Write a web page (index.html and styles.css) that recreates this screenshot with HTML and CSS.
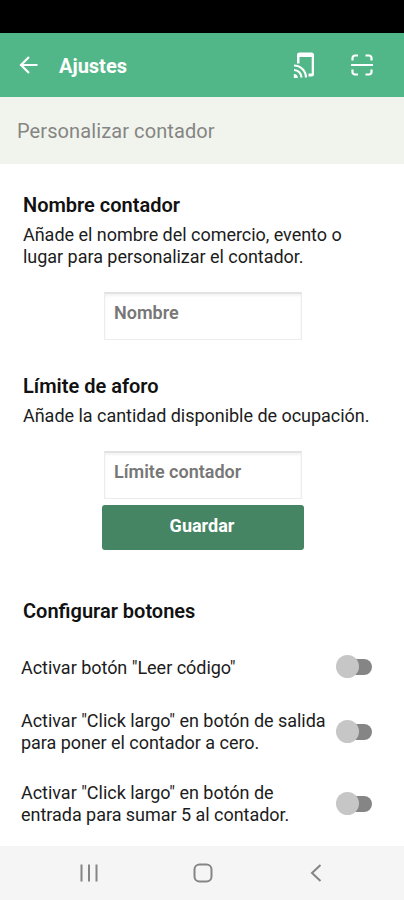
FILE: index.html
```html
<!DOCTYPE html>
<html lang="es">
<head>
    <meta charset="UTF-8">
    <meta name="viewport" content="width=device-width, initial-scale=1.0">
    <title>Ajustes</title>
    <link rel="stylesheet" href="styles.css">
</head>
<body>

    <div class="status-bar"></div>

    <!-- Header -->
    <header class="header">
        <svg class="icon-back" width="20" height="20" viewBox="0 0 20 20">
            <path d="M18.500 10H2.500M10 2L2 10L10 18" />
        </svg>
        <h1>Ajustes</h1>
        <svg class="icon-tap" width="24" height="28" viewBox="0 0 24 28">
            <path class="fill" d="M6.500 1.500h12a2.500 2.500 0 0 1 2.500 2.500v19a2.500 2.500 0 0 1-2.500 2.500h-3v-3h3.200V6H6.500v6.500H4V4A2.500 2.500 0 0 1 6.500 1.500z" />
            <path d="M1 14.500A12 12 0 0 1 13 26.500M1 19A7.500 7.500 0 0 1 8.500 26.500" />
            <path class="fill" d="M.8 23a4 4 0 0 1 4 4h-4z" />
        </svg>
        <svg class="icon-scan" width="24" height="24" viewBox="0 0 24 24">
            <path d="M2.500 7.500V5a2.500 2.500 0 0 1 2.500-2.500h3M15.500 2.500h3.500a2.500 2.500 0 0 1 2.500 2.500v2.500M2.500 16.500V19a2.500 2.500 0 0 0 2.500 2.500h3M15.500 21.500h3.500a2.500 2.500 0 0 0 2.500-2.500v-2.500M1 12h22" />
        </svg>
    </header>

    <div class="subtitle">Personalizar contador</div>

    <!-- Settings -->
    <main class="content">
        <section class="name-section">
            <h2>Nombre contador</h2>
            <p>Añade el nombre del comercio, evento o<br>lugar para personalizar el contador.</p>
            <input type="text" id="name" placeholder="Nombre">
        </section>

        <section class="limit-section">
            <h2>Límite de aforo</h2>
            <p>Añade la cantidad disponible de ocupación.</p>
            <input type="text" id="limit" placeholder="Límite contador">
            <button class="save">Guardar</button>
        </section>

        <section class="buttons-section">
            <h2>Configurar botones</h2>
            <div class="option first">
                <span>Activar botón "Leer código"</span>
                <div class="switch"></div>
            </div>
            <div class="option second">
                <span>Activar "Click largo" en botón de salida<br>para poner el contador a cero.</span>
                <div class="switch"></div>
            </div>
            <div class="option">
                <span>Activar "Click largo" en botón de<br>entrada para sumar 5 al contador.</span>
                <div class="switch"></div>
            </div>
        </section>
    </main>

    <!-- Navigation bar -->
    <nav class="nav-bar">
        <svg width="20" height="20" viewBox="0 0 20 20">
            <path d="M2.500 1.500v17M10 1.500v17M17.500 1.500v17" />
        </svg>
        <svg width="20" height="20" viewBox="0 0 20 20">
            <rect x="1.500" y="1.500" width="17" height="17" rx="5" />
        </svg>
        <svg width="20" height="20" viewBox="0 0 20 20">
            <path d="M14.500 2L6 10L14.500 18" />
        </svg>
    </nav>

</body>
</html>
```

FILE: styles.css
```css
body {
    margin: 0;
    height: 900px;
    display: flex;
    flex-direction: column;
    overflow: hidden;
    background-color: white;
    color: #1c1c1c;
    font-family: Roboto, sans-serif;
}
h1, h2, p {
    margin: 0;
}
svg {
    fill: none;
    stroke: white;
    stroke-width: 2.2;
    flex-shrink: 0;
}
.fill {
    fill: white;
    stroke: none;
}
.status-bar {
    height: 33px;
    background-color: black;
}
.header {
    height: 64px;
    display: flex;
    align-items: center;
    padding: 0 30px 0 19px;
    background-color: #52b788;
}
.header h1 {
    flex: 1;
    margin-left: 20px;
    padding-top: 2px;
    font-size: 20px;
    font-weight: 700;
    color: white;
}
.icon-tap {
    margin-right: 33px;
}
.subtitle {
    height: 67px;
    line-height: 68px;
    padding-left: 17px;
    background-color: #f1f4ec;
    color: #858585;
    font-size: 20px;
    letter-spacing: 0.1px;
}
.content {
    flex: 1;
}
h2 {
    padding-left: 23px;
    font-size: 20px;
    line-height: 24px;
    font-weight: 600;
    color: #111;
}
p {
    margin-top: 7px;
    padding-left: 23px;
    font-size: 18px;
    line-height: 21.5px;
    letter-spacing: -0.03px;
    white-space: nowrap;
}
input {
    display: block;
    box-sizing: border-box;
    width: 198px;
    height: 48px;
    margin: 25px 0 0 104px;
    padding: 0 9px 8px;
    border: 1px solid #ececec;
    border-top: 2px solid #e2e2e2;
    box-shadow: inset 0 2px 3px #f3f3f3;
    font-family: inherit;
    font-size: 18px;
    font-weight: 600;
}
input::placeholder {
    color: #777;
}
.name-section {
    padding-top: 29px;
}
.limit-section {
    padding-top: 34px;
}
.limit-section input {
    margin-top: 24px;
}
.buttons-section {
    padding-top: 49px;
}
.save {
    display: block;
    width: 202px;
    height: 45px;
    margin: 6px 0 0 102px;
    padding: 0 2px 4px 0;
    border: none;
    border-radius: 3px;
    background-color: #458564;
    color: white;
    font-family: inherit;
    font-size: 18px;
    font-weight: 700;
}
.option {
    display: flex;
    justify-content: space-between;
    align-items: center;
    padding: 0 32px 0 21px;
    margin-top: 29px;
    font-size: 18px;
    line-height: 21.5px;
    letter-spacing: -0.03px;
    white-space: nowrap;
}
.first {
    margin-top: 34px;
}
.second {
    margin-top: 32px;
}
.switch {
    position: relative;
    width: 26px;
    height: 16px;
    border-radius: 8px;
    background-color: #858585;
}
.switch::before {
    content: "";
    position: absolute;
    left: -10px;
    top: -4px;
    width: 23px;
    height: 23px;
    border-radius: 50%;
    background-color: #c6c6c6;
}
.nav-bar {
    height: 54px;
    display: flex;
    justify-content: space-between;
    align-items: center;
    padding: 0 78px 0 79px;
    background-color: #f5f5f5;
}
.nav-bar svg {
    stroke: #858585;
    stroke-width: 2;
}
```
